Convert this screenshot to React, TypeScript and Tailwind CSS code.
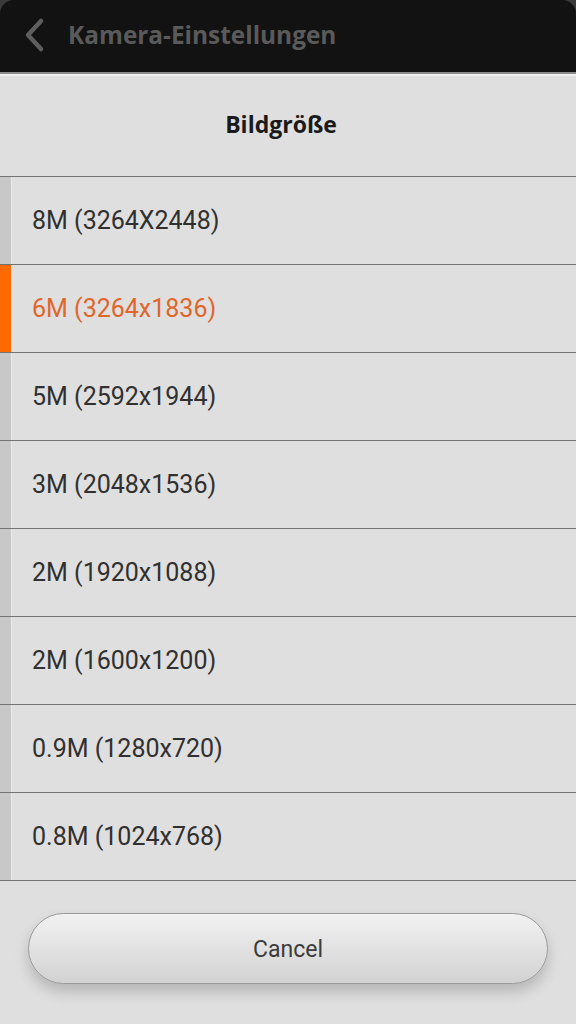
import React from "react";

const items = [
  "8M (3264X2448)",
  "6M (3264x1836)",
  "5M (2592x1944)",
  "3M (2048x1536)",
  "2M (1920x1088)",
  "2M (1600x1200)",
  "0.9M (1280x720)",
  "0.8M (1024x768)",
];

export default function App() {
  return (
    <div className="w-[576px] h-[1024px] bg-[#dfdfdf] flex flex-col overflow-hidden" style={{ fontFamily: "Roboto, 'Liberation Sans', sans-serif" }}>
      <div className="bg-[#3a3a3a]">
        <div className="h-[72px] bg-[#121212] rounded-t-[14px] flex items-center">
          <svg width="24" height="36" viewBox="0 0 24 36" className="ml-[22px] -mt-[2px]">
            <path d="M19 4 L6 18 L19 32" fill="none" stroke="#5e5e5e" strokeWidth="4.5" strokeLinecap="round" strokeLinejoin="round" />
          </svg>
          <span className="ml-[22px] text-[24.4px] font-bold text-[#5a5a5a] -mt-[2px]" style={{ fontFamily: "'Open Sans', 'Noto Sans', sans-serif" }}>
            Kamera-Einstellungen
          </span>
        </div>
      </div>
      <div className="h-[2px] bg-[#8c8c8c]" />
      <div className="h-[2px] bg-[#f0f0f0]" />
      <div className="h-[101px] flex items-center justify-center border-b border-[#737373]">
        <span className="text-[23px] font-bold text-[#1a1a1a] -mt-[3px] mr-[14px]" style={{ fontFamily: "'Open Sans', 'Noto Sans', sans-serif" }}>
          Bildgröße
        </span>
      </div>
      <div className="flex flex-col">
        {items.map((t, i) => {
          const sel = i === 1;
          return (
            <div key={i} className="h-[88px] flex border-b border-[#737373]">
              <div className={`w-[11px] ${sel ? "bg-[#ff6a00]" : "bg-[#c8c8c8]"}`} />
              <div className="w-[1px] bg-[#eaeaea]" />
              <div className={`flex items-center pl-[20px] pt-[1px] text-[25px] ${sel ? "text-[#e0662a]" : "text-[#303030]"}`}>
                {t}
              </div>
            </div>
          );
        })}
      </div>
      <div className="flex-1 flex items-start justify-center pt-[32px]">
        <div
          className="w-[520px] h-[71px] rounded-full border border-[#9a9a9a] flex items-center justify-center pt-[3px] text-[23px] text-[#3c3c3c] bg-gradient-to-b from-[#f2f2f2] to-[#d2d2d2]"
          style={{ boxShadow: "0 8px 14px rgba(0,0,0,0.18)" }}
        >
          Cancel
        </div>
      </div>
    </div>
  );
}
